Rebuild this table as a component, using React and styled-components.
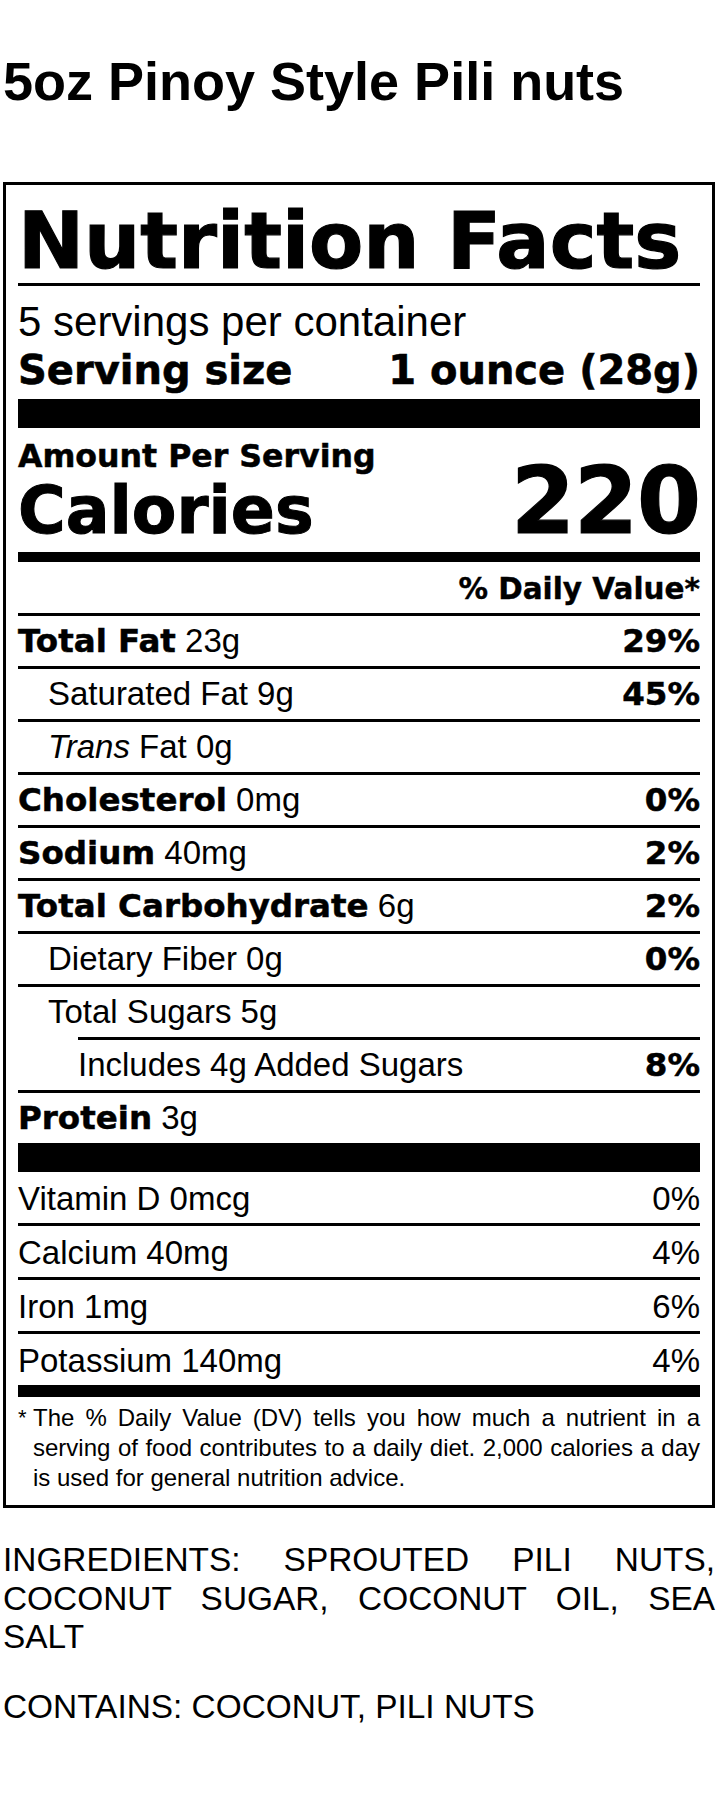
import React from "react";
import styled, { createGlobalStyle } from "styled-components";

const GlobalStyle = createGlobalStyle`
  html, body { margin: 0; padding: 0; background: #fff; color: #000; }
  * { box-sizing: border-box; }
`;

const SANS = `"Liberation Sans", Arial, Helvetica, sans-serif`;
const HEAVY = `"DejaVu Sans", "Liberation Sans", Arial, sans-serif`;

const Page = styled.div`
  width: 722px;
  padding: 0 7px 0 3px;
  font-family: ${SANS};
`;

const Title = styled.h1`
  margin: 50px 0 70px;
  font: 700 54px/62px ${SANS};
  white-space: nowrap;
`;

const Label = styled.section`
  border: 3px solid #000;
  padding: 16px 12px 12px;
`;

const Heading = styled.h2`
  margin: 0;
  padding-bottom: 2px;
  border-bottom: 3px solid #000;
  font: 700 79px/80px ${HEAVY};
  -webkit-text-stroke: 1.2px #000;
  white-space: nowrap;
`;

const Servings = styled.div`
  margin-top: 14px;
  font: 400 42px/44px ${SANS};
`;

const ServingSize = styled.div`
  margin-top: 4px;
  display: flex;
  justify-content: space-between;
  font: 700 40px/44px ${HEAVY};
  -webkit-text-stroke: 0.6px #000;
  white-space: nowrap;
`;

const Bar = styled.div`
  height: ${(p) => p.$h}px;
  margin-top: ${(p) => p.$mt || 0}px;
  background: #000;
`;

const CaloriesBlock = styled.div`
  margin-top: 11px;
  display: flex;
  justify-content: space-between;
  align-items: flex-end;
`;

const AmountLabel = styled.div`
  font: 700 31.6px/34px ${HEAVY};
  -webkit-text-stroke: 0.5px #000;
  white-space: nowrap;
`;

const CaloriesLabel = styled.div`
  margin-top: 6px;
  font: 700 65px/64px ${HEAVY};
  -webkit-text-stroke: 1px #000;
`;

const CaloriesValue = styled.div`
  font: 700 92px/82px ${HEAVY};
  letter-spacing: -1px;
  -webkit-text-stroke: 1.2px #000;
`;

const DVHeader = styled.div`
  padding-top: 3px;
  text-align: right;
  font: 700 29.5px/48px ${HEAVY};
  -webkit-text-stroke: 0.4px #000;
`;

const Row = styled.div`
  display: flex;
  justify-content: space-between;
  align-items: baseline;
  height: ${(p) => p.$h || 53}px;
  margin-left: ${(p) => p.$inset || 0}px;
  padding-left: ${(p) => p.$indent || 0}px;
  padding-top: ${(p) => p.$pt || 0}px;
  border-top: ${(p) => (p.$noRule ? "none" : "3px solid #000")};
  font: 400 33px/50px ${SANS};
  white-space: nowrap;
`;

const Strong = styled.span`
  font: 700 32.5px/50px ${HEAVY};
  -webkit-text-stroke: 0.5px #000;
`;

const Em = styled.em`
  font-style: italic;
`;

const Percent = styled.span`
  font: ${(p) => (p.$bold ? `700 32.5px/50px ${HEAVY}` : `400 33px/50px ${SANS}`)};
  -webkit-text-stroke: ${(p) => (p.$bold ? "0.5px #000" : "0")};
`;

const Footnote = styled.div`
  margin-top: 6px;
  display: grid;
  grid-template-columns: 15px 1fr;
  font: 400 24px/30px ${SANS};
`;

const Star = styled.span`
  font-size: 22px;
`;

const FootText = styled.p`
  margin: 0;
  text-align: justify;
`;

const Ingredients = styled.p`
  margin: 33px 0 0;
  font: 400 33.4px/38.6px ${SANS};
  text-align: justify;
`;

const Contains = styled.p`
  margin: 31px 0 0;
  font: 400 33.4px/38.6px ${SANS};
`;

const nutrients = [
  { bold: "Total Fat", amt: "23g", dv: "29%" },
  { name: "Saturated Fat 9g", dv: "45%", indent: 30 },
  { trans: true, indent: 30 },
  { bold: "Cholesterol", amt: "0mg", dv: "0%" },
  { bold: "Sodium", amt: "40mg", dv: "2%" },
  { bold: "Total Carbohydrate", amt: "6g", dv: "2%" },
  { name: "Dietary Fiber 0g", dv: "0%", indent: 30 },
  { name: "Total Sugars 5g", indent: 30 },
  { name: "Includes 4g Added Sugars", dv: "8%", inset: 60 },
  { bold: "Protein", amt: "3g" },
];

const vitamins = [
  { name: "Vitamin D 0mcg", dv: "0%" },
  { name: "Calcium 40mg", dv: "4%" },
  { name: "Iron 1mg", dv: "6%" },
  { name: "Potassium 140mg", dv: "4%" },
];

export default function App() {
  return (
    <>
      <GlobalStyle />
      <Page>
        <Title>5oz Pinoy Style Pili nuts</Title>
        <Label>
          <Heading>Nutrition Facts</Heading>
          <Servings>5 servings per container</Servings>
          <ServingSize>
            <span>Serving size</span>
            <span>1 ounce (28g)</span>
          </ServingSize>
          <Bar $h={29} $mt={7} />
          <CaloriesBlock>
            <div>
              <AmountLabel>Amount Per Serving</AmountLabel>
              <CaloriesLabel>Calories</CaloriesLabel>
            </div>
            <CaloriesValue>220</CaloriesValue>
          </CaloriesBlock>
          <Bar $h={10} $mt={9} />
          <DVHeader>% Daily Value*</DVHeader>
          {nutrients.map((n, i) => (
            <Row key={i} $indent={n.indent} $inset={n.inset}>
              <span>
                {n.bold && (
                  <>
                    <Strong>{n.bold}</Strong> {n.amt}
                  </>
                )}
                {n.name}
                {n.trans && (
                  <>
                    <Em>Trans</Em> Fat 0g
                  </>
                )}
              </span>
              {n.dv && <Percent $bold>{n.dv}</Percent>}
            </Row>
          ))}
          <Bar $h={29} />
          {vitamins.map((v, i) => (
            <Row key={v.name} $noRule={i === 0} $h={i === 0 ? 51 : 54} $pt={2}>
              <span>{v.name}</span>
              <Percent>{v.dv}</Percent>
            </Row>
          ))}
          <Bar $h={12} />
          <Footnote>
            <Star>*</Star>
            <FootText>
              The % Daily Value (DV) tells you how much a nutrient in a serving of food
              contributes to a daily diet. 2,000 calories a day is used for general
              nutrition advice.
            </FootText>
          </Footnote>
        </Label>
        <Ingredients>
          INGREDIENTS: SPROUTED PILI NUTS, COCONUT SUGAR, COCONUT OIL, SEA SALT
        </Ingredients>
        <Contains>CONTAINS: COCONUT, PILI NUTS</Contains>
      </Page>
    </>
  );
}
